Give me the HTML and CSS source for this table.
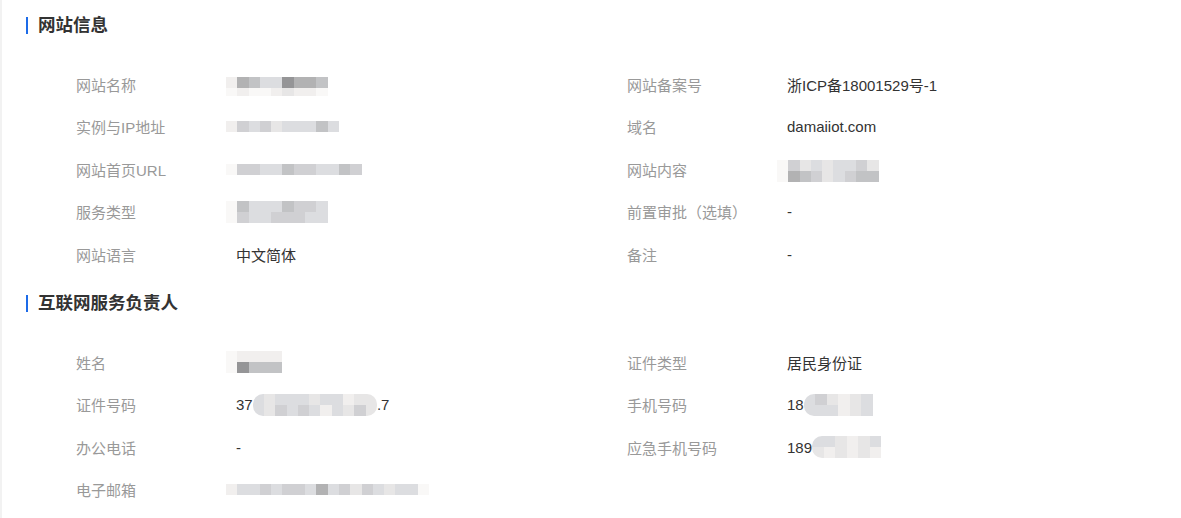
FILE: index.html
```html
<!DOCTYPE html>
<html lang="zh-CN">
<head>
  <meta charset="UTF-8" />
  <title>网站信息</title>
  <link rel="stylesheet" href="styles.css">
</head>
<body>
  <div class="page">
    <h2 class="section-title">网站信息</h2>
    <div class="info-grid">
      <div class="item">
        <span class="label">网站名称</span>
        <span class="value">
          <span class="mosaic shift">
            <span class="m-row"><i class="a"></i><i class="f"></i><i class="e"></i><i class="c"></i><i class="c"></i><i class="g"></i><i class="f"></i><i class="f"></i><i class="e"></i></span>
            <span class="m-row thin"><i class="w"></i><i class="a"></i><i class="w"></i><i class="w"></i><i class="a"></i><i class="b"></i><i class="a"></i><i class="a"></i><i class="w"></i></span>
          </span>
        </span>
      </div>
      <div class="item">
        <span class="label">网站备案号</span>
        <span class="value">浙ICP备18001529号-1</span>
      </div>

      <div class="item">
        <span class="label">实例与IP地址</span>
        <span class="value">
          <span class="mosaic">
            <span class="m-row"><i class="a"></i><i class="d"></i><i class="c"></i><i class="d"></i><i class="b"></i><i class="c"></i><i class="c"></i><i class="c"></i><i class="e"></i><i class="c"></i></span>
          </span>
        </span>
      </div>
      <div class="item">
        <span class="label">域名</span>
        <span class="value">damaiiot.com</span>
      </div>

      <div class="item">
        <span class="label">网站首页URL</span>
        <span class="value">
          <span class="mosaic">
            <span class="m-row"><i class="w"></i><i class="d"></i><i class="d"></i><i class="c"></i><i class="c"></i><i class="e"></i><i class="d"></i><i class="d"></i><i class="c"></i><i class="c"></i><i class="e"></i><i class="d"></i></span>
          </span>
        </span>
      </div>
      <div class="item">
        <span class="label">网站内容</span>
        <span class="value">
          <span class="mosaic shift">
            <span class="m-row"><i class="w"></i><i class="d"></i><i class="b"></i><i class="c"></i><i class="b"></i><i class="c"></i><i class="c"></i><i class="d"></i><i class="b"></i></span>
            <span class="m-row"><i class="w"></i><i class="f"></i><i class="e"></i><i class="d"></i><i class="b"></i><i class="c"></i><i class="d"></i><i class="e"></i><i class="e"></i></span>
          </span>
        </span>
      </div>

      <div class="item">
        <span class="label">服务类型</span>
        <span class="value">
          <span class="mosaic">
            <span class="m-row"><i class="w"></i><i class="e"></i><i class="c"></i><i class="c"></i><i class="c"></i><i class="e"></i><i class="d"></i><i class="d"></i><i class="c"></i></span>
            <span class="m-row"><i class="w"></i><i class="d"></i><i class="c"></i><i class="c"></i><i class="d"></i><i class="d"></i><i class="d"></i><i class="c"></i><i class="c"></i></span>
          </span>
        </span>
      </div>
      <div class="item">
        <span class="label">前置审批（选填）</span>
        <span class="value">-</span>
      </div>

      <div class="item">
        <span class="label">网站语言</span>
        <span class="value">中文简体</span>
      </div>
      <div class="item">
        <span class="label">备注</span>
        <span class="value">-</span>
      </div>
    </div>

    <h2 class="section-title">互联网服务负责人</h2>
    <div class="info-grid">
      <div class="item">
        <span class="label">姓名</span>
        <span class="value">
          <span class="mosaic">
            <span class="m-row"><i class="w"></i><i class="a"></i><i class="a"></i><i class="a"></i><i class="a"></i></span>
            <span class="m-row"><i class="w"></i><i class="g"></i><i class="e"></i><i class="e"></i><i class="e"></i></span>
          </span>
        </span>
      </div>
      <div class="item">
        <span class="label">证件类型</span>
        <span class="value">居民身份证</span>
      </div>

      <div class="item">
        <span class="label">证件号码</span>
        <span class="value">37<span class="mosaic pill">
            <span class="m-row"><i class="c"></i><i class="b"></i><i class="c"></i><i class="c"></i><i class="c"></i><i class="b"></i><i class="c"></i><i class="c"></i><i class="a"></i><i class="b"></i><i class="b"></i></span>
            <span class="m-row"><i class="c"></i><i class="b"></i><i class="d"></i><i class="c"></i><i class="d"></i><i class="c"></i><i class="a"></i><i class="c"></i><i class="b"></i><i class="d"></i><i class="b"></i></span>
          </span>.7</span>
      </div>
      <div class="item">
        <span class="label">手机号码</span>
        <span class="value">18<span class="mosaic pill short">
            <span class="m-row"><i class="c"></i><i class="d"></i><i class="b"></i><i class="a"></i><i class="b"></i><i class="c"></i></span>
            <span class="m-row"><i class="c"></i><i class="c"></i><i class="c"></i><i class="a"></i><i class="b"></i><i class="c"></i></span>
          </span></span>
      </div>

      <div class="item">
        <span class="label">办公电话</span>
        <span class="value">-</span>
      </div>
      <div class="item">
        <span class="label">应急手机号码</span>
        <span class="value">189<span class="mosaic pill short">
            <span class="m-row"><i class="c"></i><i class="c"></i><i class="b"></i><i class="a"></i><i class="b"></i><i class="c"></i></span>
            <span class="m-row"><i class="b"></i><i class="a"></i><i class="b"></i><i class="a"></i><i class="b"></i><i class="a"></i></span>
          </span></span>
      </div>

      <div class="item">
        <span class="label">电子邮箱</span>
        <span class="value">
          <span class="mosaic">
            <span class="m-row"><i class="a"></i><i class="c"></i><i class="c"></i><i class="d"></i><i class="c"></i><i class="d"></i><i class="d"></i><i class="c"></i><i class="f"></i><i class="c"></i><i class="d"></i><i class="b"></i><i class="d"></i><i class="c"></i><i class="b"></i><i class="c"></i><i class="c"></i><i class="w"></i></span>
          </span>
        </span>
      </div>
    </div>
  </div>
</body>
</html>
```

FILE: styles.css
```css
* {
  box-sizing: border-box;
  margin: 0;
  padding: 0;
}

body {
  background: #fff;
  font-family: "Liberation Sans", "Noto Sans CJK SC", sans-serif;
  font-size: 15px;
  color: #333;
}

.page {
  min-height: 518px;
  border-left: 2px solid #f2f2f2;
  padding-top: 15px;
}

.section-title {
  position: relative;
  margin-left: 24px;
  padding-left: 12px;
  height: 20px;
  line-height: 20px;
  font-size: 17.5px;
  font-weight: bold;
  color: #333;
}

.section-title::before {
  content: "";
  position: absolute;
  left: 0;
  top: 2px;
  width: 2px;
  height: 17px;
  background: #1d6be8;
}

.info-grid {
  display: grid;
  grid-template-columns: 551px 551px;
  grid-auto-rows: 42.5px;
  align-items: center;
  margin: 27.75px 0 18px 74px;
}

.item {
  display: flex;
  align-items: center;
}

.label {
  width: 160px;
  flex-shrink: 0;
  color: #999;
}

.value {
  display: flex;
  align-items: center;
  color: #333;
}

/* pixelated (masked) values */
.mosaic {
  display: inline-flex;
  flex-direction: column;
  margin-left: -10px;
}

.mosaic.shift {
  margin-top: 4px;
}

.m-row {
  display: flex;
}

.m-row i {
  display: block;
  width: 11.3px;
  height: 11px;
}

.m-row.thin i {
  height: 8px;
}

.mosaic.pill {
  margin-left: 0;
  border-radius: 10px;
  overflow: hidden;
}

.mosaic.pill.short {
  border-radius: 10px 0 0 10px;
}

.mosaic.pill.short i {
  width: 11.5px;
}

.w { background: #f9f8f7; }
.a { background: #f1efee; }
.b { background: #e7e6e6; }
.c { background: #dcdde0; }
.d { background: #d0d0d3; }
.e { background: #c2c3c5; }
.f { background: #b2b2b3; }
.g { background: #959597; }
```
